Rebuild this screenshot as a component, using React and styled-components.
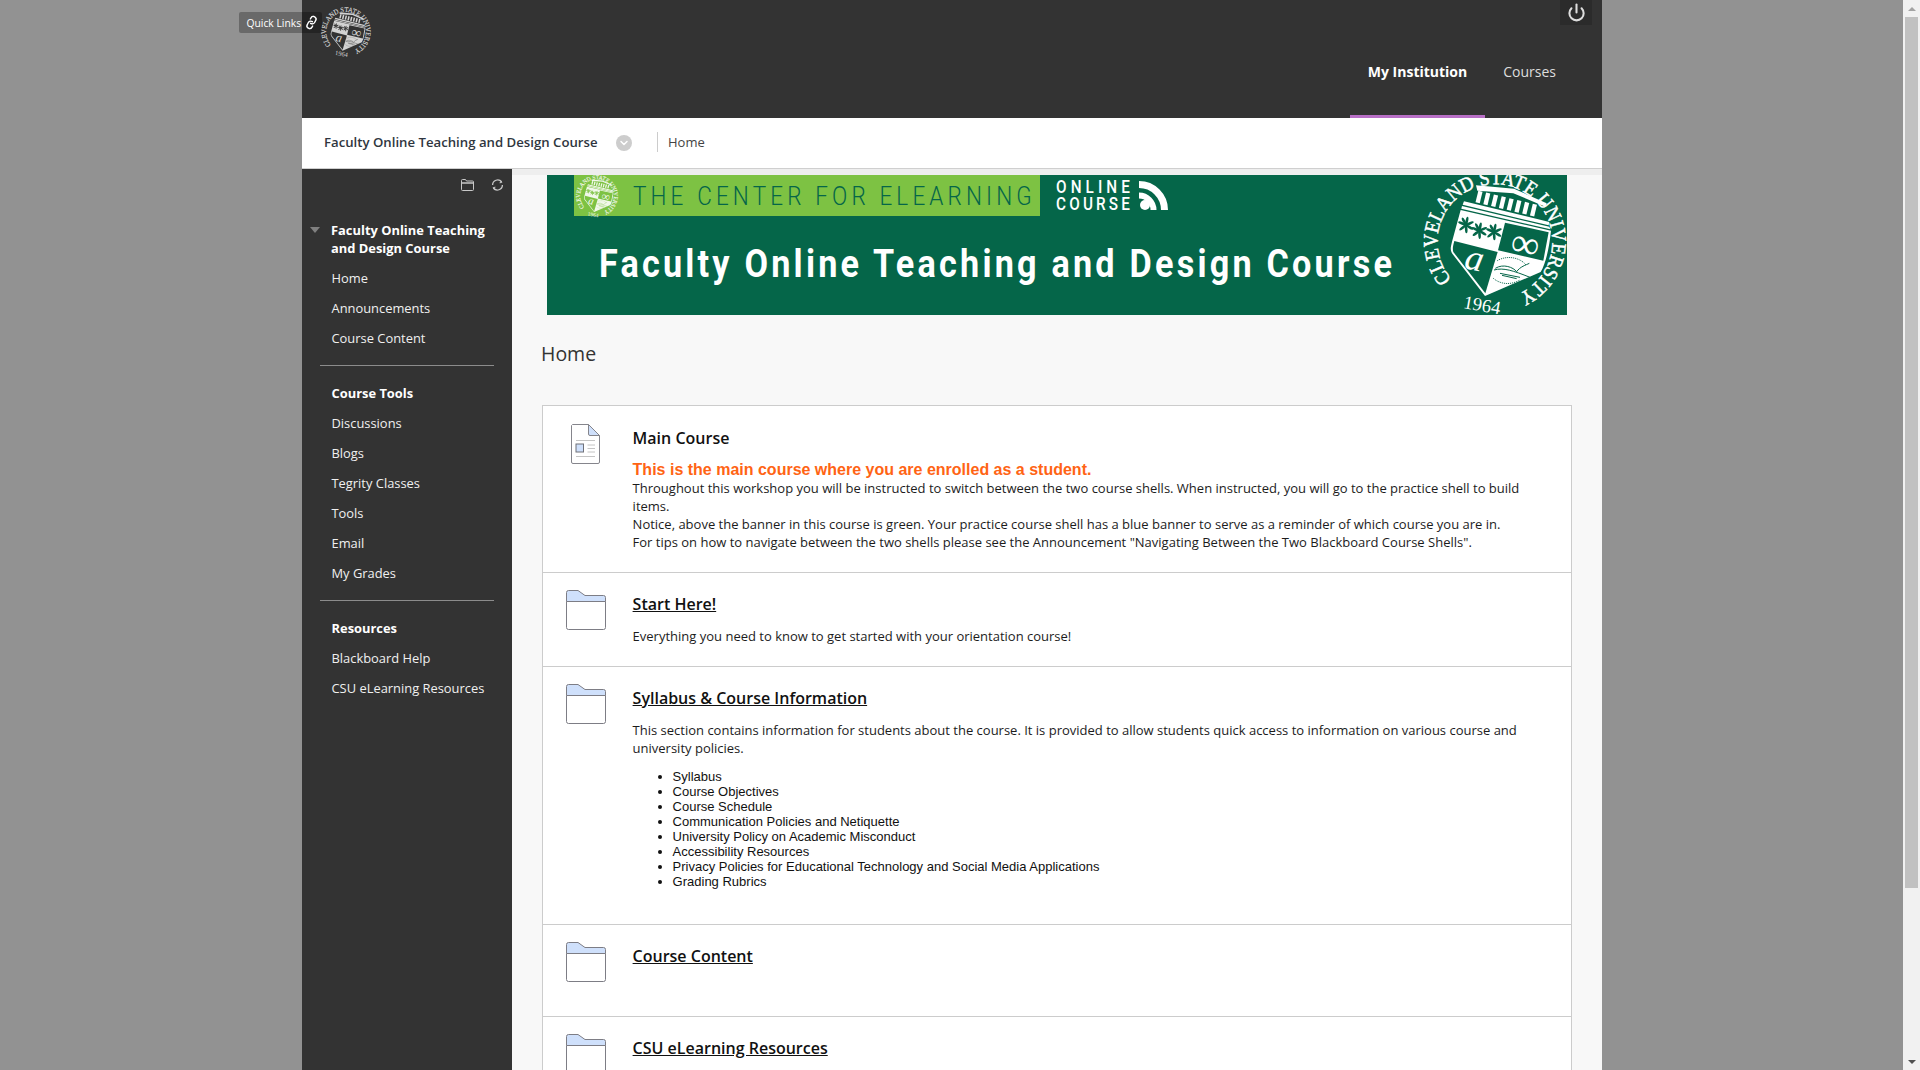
import React from "react";
import styled, { createGlobalStyle } from "styled-components";
import { Power, Link as LinkIcon, ChevronDown } from "lucide-react";

const GlobalStyle = createGlobalStyle`
  html, body {
    margin: 0;
    padding: 0;
    height: 100%;
    overflow: hidden;
    font-family: "Open Sans", "Liberation Sans", sans-serif;
  }
  * { box-sizing: border-box; }
`;

const Page = styled.div`
  display: flex;
  height: 100vh;
  overflow: hidden;
  background: #929292;
`;

const Viewport = styled.div`
  flex: 1;
  height: 100%;
  overflow: hidden;
`;

const Shell = styled.div`
  position: relative;
  display: flex;
  flex-direction: column;
  width: 1300px;
  height: 100%;
  margin-left: 302px;
`;

const Scrollbar = styled.div`
  display: flex;
  flex-direction: column;
  align-items: center;
  width: 17px;
  height: 100%;
  background: #f1f1f1;
`;

const ArrowBox = styled.div`
  display: flex;
  align-items: center;
  justify-content: center;
  width: 100%;
  height: 17px;
`;

const Arrow = styled.span`
  width: 0;
  height: 0;
  border-left: 4px solid transparent;
  border-right: 4px solid transparent;
  border-top: ${({ $up }) => ($up ? "0" : "4px solid #505050")};
  border-bottom: ${({ $up }) => ($up ? "4px solid #a3a3a3" : "0")};
`;

const Thumb = styled.div`
  width: 13px;
  height: 871px;
  margin-bottom: auto;
  background: #c1c1c1;
`;

const TopBar = styled.header`
  display: flex;
  justify-content: space-between;
  height: 118px;
  flex: none;
  background: #333;
`;

const LogoBox = styled.div`
  padding: 7px 0 0 18px;
  line-height: 0;
`;

const QuickLinks = styled.a`
  position: absolute;
  top: 12px;
  left: -63px;
  display: flex;
  align-items: center;
  justify-content: space-between;
  width: 83px;
  height: 21px;
  padding: 0 4px 0 7.5px;
  font-size: 10.3px;
  color: #fff;
  background: rgba(0, 0, 0, 0.28);
  border-radius: 2px;
`;

const ChainIcon = styled(LinkIcon)`
  transform: rotate(-16deg);
`;

const TopRight = styled.div`
  display: flex;
  flex-direction: column;
  align-items: flex-end;
  justify-content: space-between;
`;

const PowerButton = styled.button`
  display: flex;
  align-items: center;
  justify-content: center;
  width: 32px;
  height: 25px;
  margin-right: 10px;
  padding: 0;
  border: 0;
  color: #ddd;
  background: #2b2b2b;
`;

const Tabs = styled.nav`
  display: flex;
  margin-right: 28px;
`;

const Tab = styled.a`
  display: block;
  height: 64px;
  padding: 0 18px;
  font-size: 14px;
  line-height: 36px;
  font-weight: ${({ $active }) => ($active ? 700 : 400)};
  color: ${({ $active }) => ($active ? "#fff" : "#ddd")};
  border-bottom: 3px solid ${({ $active }) => ($active ? "#b86fc6" : "transparent")};
`;

const CourseBar = styled.div`
  display: flex;
  align-items: center;
  flex: none;
  height: 51px;
  padding: 0 0 3px 22px;
  background: #fff;
  border-bottom: 1px solid #cfcfcf;
`;

const CourseName = styled.a`
  font-size: 13.2px;
  font-weight: 600;
  color: #2f3640;
`;

const CourseMenu = styled.span`
  display: flex;
  align-items: center;
  justify-content: center;
  width: 16px;
  height: 16px;
  margin: 3px 0 0 18.5px;
  border-radius: 50%;
  color: #fff;
  background: #cdcdcd;
`;

const Crumb = styled.span`
  margin-left: 25px;
  padding-left: 10px;
  font-size: 13px;
  line-height: 20px;
  color: #444;
  border-left: 1px solid #ccc;
`;

const Body = styled.div`
  display: flex;
  flex: 1;
  min-height: 0;
`;

const Sidebar = styled.aside`
  flex: none;
  width: 210px;
  background: #333;
`;

const SideTools = styled.div`
  display: flex;
  justify-content: flex-end;
  gap: 17px;
  height: 52px;
  padding: 10px 8px 0 0;
  color: #c8c8c8;
`;

const CourseTitleRow = styled.div`
  display: flex;
  gap: 11px;
  padding-left: 8px;
`;

const Caret = styled.span`
  flex: none;
  width: 0;
  height: 0;
  margin-top: 6px;
  border-left: 5.5px solid transparent;
  border-right: 5.5px solid transparent;
  border-top: 6px solid #808080;
`;

const SideHeading = styled.div`
  font-size: 12.9px;
  font-weight: 700;
  line-height: ${({ $tall }) => ($tall ? "18px" : "30px")};
  color: #fff;
  padding-left: ${({ $tall }) => ($tall ? "0" : "29.5px")};
  width: ${({ $tall }) => ($tall ? "165px" : "auto")};
  margin-bottom: ${({ $tall }) => ($tall ? "6px" : "0")};
`;

const SideLink = styled.a`
  display: block;
  padding-left: 29.5px;
  font-size: 12.9px;
  line-height: 30px;
  color: #f0f0f0;
`;

const SideRule = styled.hr`
  height: 1px;
  margin: 12px 18px 12px 18px;
  border: 0;
  background: #8c8c8c;
`;

const Content = styled.main`
  flex: 1;
  min-width: 0;
  overflow: hidden;
  background: #f8f8f8;
  border-top: 6px solid #eee;
`;

const BannerBox = styled.div`
  width: 1020px;
  height: 140px;
  margin-left: 35px;
  line-height: 0;
`;

const PageTitle = styled.h1`
  margin: 25px 0 0 29px;
  font-size: 19.5px;
  font-weight: 400;
  line-height: 28px;
  color: #333;
`;

const ContentList = styled.ul`
  width: 1030px;
  margin: 37px 0 0 30px;
  padding: 0;
  list-style: none;
  background: #fff;
  border: 1px solid #ccc;
`;

const Row = styled.li`
  display: flex;
  min-height: ${({ $minHeight }) => $minHeight || 0}px;
  padding-top: ${({ $top }) => $top || 21}px;
  padding-bottom: ${({ $bottom }) => $bottom || 21}px;
  padding-right: 30px;
  border-top: ${({ $first }) => ($first ? "0" : "1px solid #ccc")};
`;

const IconCell = styled.div`
  position: relative;
  flex: none;
  width: 89.6px;
`;

const RowIcon = styled.svg`
  position: absolute;
  top: ${({ $top }) => $top}px;
  left: ${({ $left }) => $left}px;
`;

const RowText = styled.div`
  flex: 1;
  min-width: 0;
`;

const RowTitle = styled.h3`
  margin: 0;
  font-size: 16px;
  font-weight: 600;
  line-height: 20px;
  color: #111;
  text-decoration: ${({ $link }) => ($link ? "underline" : "none")};
`;

const Alert = styled.div`
  margin-top: 13px;
  font-family: "Liberation Sans", Arial, sans-serif;
  font-size: 16px;
  font-weight: 700;
  line-height: 18px;
  color: #ff6414;
`;

const Copy = styled.p`
  margin: ${({ $tight }) => ($tight ? "0" : "13px 0 0")};
  font-size: 13px;
  line-height: 18px;
  color: #1c1c1c;
`;

const Bullets = styled.ul`
  margin: 12px 0 0;
  padding-left: 40px;
  list-style: disc;
  font-family: "Liberation Sans", Arial, sans-serif;
  font-size: 13px;
  line-height: 15px;
  color: #111;
`;

const SerifLabel = styled.text`
  font-family: "Liberation Serif", serif;
`;

const BannerLabel = styled.text`
  font-family: Roboto, "Liberation Sans", sans-serif;
  font-weight: ${({ $weight }) => $weight || 400};
`;

const Leaf = ({ x, y, fill }) => (
  <g transform={`translate(${x} ${y}) rotate(12)`} fill={fill}>
    {[0, 55, 110, 165, 220, 280, 320].map((a) => (
      <ellipse key={a} cx="0" cy="-12" rx="4" ry="13" transform={`rotate(${a})`} />
    ))}
  </g>
);

// seal is drawn in a 450 box, centre at 225,215
const Seal = ({ x, y, size, fg, bg }) => {
  const columns = [0, 1, 2, 3, 4, 5, 6, 7];
  return (
    <svg x={x} y={y} width={size} height={size} viewBox="0 0 450 450">
      <defs>
        <path id={`ring-${size}`} d="M 95 328 A 172 172 0 1 1 295 372" fill="none" />
      </defs>
      <SerifLabel fill={fg} stroke={fg} strokeWidth="1.5" fontSize="62">
        <textPath href={`#ring-${size}`} textLength="861" lengthAdjust="spacingAndGlyphs">
          CLEVELAND STATE UNIVERSITY
        </textPath>
      </SerifLabel>
      <SerifLabel fill={fg} fontSize="56" transform="translate(128 414) rotate(10)">
        1964
      </SerifLabel>
      <path d="M168 46 L282 56 L380 100 L376 110 L280 70 L172 62 Z" fill={fg} />
      <g transform="rotate(13.5 175 62)">
        {columns.map((c) => (
          <rect key={c} x={175 + c * 24} y="62" width="13" height="36" fill={fg} />
        ))}
      </g>
      <path d="M132 94 L388 156 L386 166 L128 104 Z" fill={fg} />
      <path d="M126 108 L388 170 L391 178 L124 116 Z" fill={fg} />
      <path d="M122 120 L393 182 C388 230 378 280 362 306 L195 378 L96 250 C90 238 92 232 96 215 Z" fill={fg} />
      <path d="M255 158 L386 187 L370 272 L234 241 Z" fill={bg} />
      <path d="M103 213 L233 246 L196 370 L100 246 C97 238 99 226 103 213 Z" fill={bg} />
      <Leaf x={138} y={165} fill={bg} />
      <Leaf x={178} y={182} fill={bg} />
      <Leaf x={222} y={186} fill={bg} />
      <SerifLabel fill={fg} fontSize="120" transform="translate(266 251) rotate(12)">
        ∞
      </SerifLabel>
      <SerifLabel fill={fg} fontSize="110" fontStyle="italic" transform="translate(130 294) rotate(12)">
        a
      </SerifLabel>
      <g fill="none" stroke={bg} strokeWidth="3">
        <path d="M226 295 C250 280 280 292 290 305 C300 290 318 285 328 280" />
        <path d="M222 300 C250 292 280 302 330 322" />
        <path d="M232 272 C260 255 300 262 318 285" strokeDasharray="3 3" />
        <path d="M220 325 C240 342 270 347 300 330" strokeDasharray="3 3" />
        <path d="M240 310 L300 322 M246 316 L290 326" />
      </g>
    </svg>
  );
};

const Banner = () => (
  <svg width="1020" height="140" viewBox="0 0 1020 140">
    <rect width="1020" height="140" fill="#056649" />
    <rect x="27" width="466" height="41" fill="#7dc243" />
    <Seal x={28} y={0} size={44} fg="#f1f8ea" bg="#7dc243" />
    <BannerLabel fill="#056649" fontSize="25" $weight={300} textLength="443" transform="translate(86 29.5) scale(.9 1)">
      THE CENTER FOR ELEARNING
    </BannerLabel>
    <BannerLabel fill="#fff" fontSize="18" $weight={500} textLength="87" transform="translate(509 18) scale(.85 1)">
      ONLINE
    </BannerLabel>
    <BannerLabel fill="#fff" fontSize="18" $weight={500} textLength="87" transform="translate(509 35) scale(.85 1)">
      COURSE
    </BannerLabel>
    <circle cx="598" cy="30" r="5" fill="#fff" />
    <path d="M592 20.5 A14.5 14.5 0 0 1 606.5 35" fill="none" stroke="#fff" strokeWidth="6" />
    <path d="M592 9.5 A25.5 25.5 0 0 1 617.5 35" fill="none" stroke="#fff" strokeWidth="7" />
    <BannerLabel fill="#fff" fontSize="38" $weight={700} textLength="881" transform="translate(52 102) scale(.9 1)">
      Faculty Online Teaching and Design Course
    </BannerLabel>
    <Seal x={873} y={-5} size={150} fg="#fff" bg="#056649" />
  </svg>
);

const FolderIcon = () => (
  <RowIcon $top={-4} $left={23} width="40" height="40" viewBox="0 0 40 40">
    <path d="M.5 11.5 V2.5 Q.5 .5 2.5 .5 H12 L19 5.5 H37.5 Q39.5 5.5 39.5 7.5 V11.5 Z" fill="#cfe0fb" stroke="#7d7d85" />
    <path d="M.5 11.5 H39.5 V37.5 Q39.5 39.5 37.5 39.5 H2.5 Q.5 39.5 .5 37.5 Z" fill="#fff" stroke="#7d7d85" />
  </RowIcon>
);

const DocIcon = () => (
  <RowIcon $top={-4} $left={28} width="29" height="40" viewBox="0 0 29 40">
    <path d="M1.5 .5 H17.5 L28.5 11.5 V38 Q28.5 39.5 27 39.5 H2 Q.5 39.5 .5 38 V1.5 Z" fill="#fff" stroke="#85858c" />
    <path d="M17.5 .5 L28.5 11.5 H19 Q17.5 11.5 17.5 10 Z" fill="#cfe0fb" stroke="#85858c" />
    <path d="M5 16.5 H24 M16.5 21 H24 M16.5 24.5 H24 M16.5 28 H24 M5 32.5 H24" stroke="#c4c4c4" />
    <rect x="5" y="20" width="7.5" height="8" fill="#cfe0fb" stroke="#6f7078" />
  </RowIcon>
);

const ToolFolder = () => (
  <svg width="13" height="12" viewBox="0 0 13 12" fill="none" stroke="currentColor">
    <path d="M.5 4 V1.5 Q.5 .5 1.5 .5 H4.5 L5.5 2 H11.5 Q12.5 2 12.5 3 V4 Z" />
    <path d="M.5 4 H12.5 V10.5 Q12.5 11.5 11.5 11.5 H1.5 Q.5 11.5 .5 10.5 Z" />
  </svg>
);

const ToolRefresh = () => (
  <svg width="13" height="12" viewBox="0 0 13 12" fill="none" stroke="currentColor" strokeWidth="1.3">
    <path d="M1.6 6 A5 5 0 0 1 10.6 3" />
    <path d="M9.6 1.4 L10.8 3.4 L8.6 3.8" strokeWidth="1" />
    <path d="M11.4 6 A5 5 0 0 1 2.4 9" />
    <path d="M3.4 10.6 L2.2 8.6 L4.4 8.2" strokeWidth="1" />
  </svg>
);

const menuGroups = [
  { heading: "Course Tools", links: ["Discussions", "Blogs", "Tegrity Classes", "Tools", "Email", "My Grades"] },
  { heading: "Resources", links: ["Blackboard Help", "CSU eLearning Resources"] },
];

const bullets = [
  "Syllabus",
  "Course Objectives",
  "Course Schedule",
  "Communication Policies and Netiquette",
  "University Policy on Academic Misconduct",
  "Accessibility Resources",
  "Privacy Policies for Educational Technology and Social Media Applications",
  "Grading Rubrics",
];

const App = () => (
  <Page>
    <GlobalStyle />
    <Viewport>
      <Shell>
        <QuickLinks>
          Quick Links
          <ChainIcon size={13} strokeWidth={2.6} />
        </QuickLinks>
        <TopBar>
          <LogoBox>
            <svg width="52" height="52" viewBox="0 0 52 52">
              <Seal x={0} y={0} size={52} fg="#d2d2d2" bg="#333" />
            </svg>
          </LogoBox>
          <TopRight>
            <PowerButton aria-label="Logout">
              <Power size={19} strokeWidth={2.6} />
            </PowerButton>
            <Tabs>
              <Tab $active>My Institution</Tab>
              <Tab>Courses</Tab>
            </Tabs>
          </TopRight>
        </TopBar>
        <CourseBar>
          <CourseName>Faculty Online Teaching and Design Course</CourseName>
          <CourseMenu>
            <ChevronDown size={12} strokeWidth={3} />
          </CourseMenu>
          <Crumb>Home</Crumb>
        </CourseBar>
        <Body>
          <Sidebar>
            <SideTools>
              <ToolFolder />
              <ToolRefresh />
            </SideTools>
            <CourseTitleRow>
              <Caret />
              <SideHeading $tall>Faculty Online Teaching and Design Course</SideHeading>
            </CourseTitleRow>
            <SideLink>Home</SideLink>
            <SideLink>Announcements</SideLink>
            <SideLink>Course Content</SideLink>
            {menuGroups.map((group) => (
              <React.Fragment key={group.heading}>
                <SideRule />
                <SideHeading>{group.heading}</SideHeading>
                {group.links.map((link) => (
                  <SideLink key={link}>{link}</SideLink>
                ))}
              </React.Fragment>
            ))}
          </Sidebar>
          <Content>
            <BannerBox>
              <Banner />
            </BannerBox>
            <PageTitle>Home</PageTitle>
            <ContentList>
              <Row $first $top={22}>
                <IconCell>
                  <DocIcon />
                </IconCell>
                <RowText>
                  <RowTitle>Main Course</RowTitle>
                  <Alert>This is the main course where you are enrolled as a student.</Alert>
                  <Copy $tight>
                    Throughout this workshop you will be instructed to switch between the two course shells. When
                    instructed, you will go to the practice shell to build items.
                    <br />
                    Notice, above the banner in this course is green. Your practice course shell has a blue banner to
                    serve as a reminder of which course you are in.
                    <br />
                    For tips on how to navigate between the two shells please see the Announcement "Navigating Between
                    the Two Blackboard Course Shells".
                  </Copy>
                </RowText>
              </Row>
              <Row>
                <IconCell>
                  <FolderIcon />
                </IconCell>
                <RowText>
                  <RowTitle $link>Start Here!</RowTitle>
                  <Copy>Everything you need to know to get started with your orientation course!</Copy>
                </RowText>
              </Row>
              <Row $bottom={35}>
                <IconCell>
                  <FolderIcon />
                </IconCell>
                <RowText>
                  <RowTitle $link>Syllabus &amp; Course Information</RowTitle>
                  <Copy>
                    This section contains information for students about the course. It is provided to allow students
                    quick access to information on various course and university policies.
                  </Copy>
                  <Bullets>
                    {bullets.map((b) => (
                      <li key={b}>{b}</li>
                    ))}
                  </Bullets>
                </RowText>
              </Row>
              <Row $minHeight={92}>
                <IconCell>
                  <FolderIcon />
                </IconCell>
                <RowText>
                  <RowTitle $link>Course Content</RowTitle>
                </RowText>
              </Row>
              <Row $minHeight={92}>
                <IconCell>
                  <FolderIcon />
                </IconCell>
                <RowText>
                  <RowTitle $link>CSU eLearning Resources</RowTitle>
                </RowText>
              </Row>
            </ContentList>
          </Content>
        </Body>
      </Shell>
    </Viewport>
    <Scrollbar>
      <ArrowBox>
        <Arrow $up />
      </ArrowBox>
      <Thumb />
      <ArrowBox>
        <Arrow />
      </ArrowBox>
    </Scrollbar>
  </Page>
);

export default App;
